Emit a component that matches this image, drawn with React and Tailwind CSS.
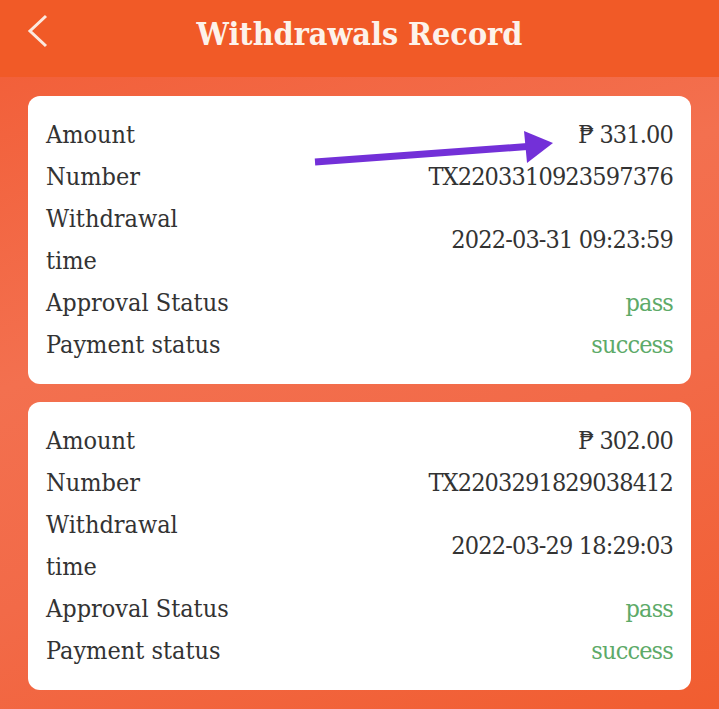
import React from 'react';

const records = [
  { amount: '₱ 331.00', number: 'TX2203310923597376', time: '2022-03-31 09:23:59' },
  { amount: '₱ 302.00', number: 'TX2203291829038412', time: '2022-03-29 18:29:03' },
];

const serif = { fontFamily: '"DejaVu Serif Condensed", "DejaVu Serif", serif' };

function Row({ label, children, valueClass = 'text-[#333]' }) {
  return (
    <div className="flex items-center justify-between leading-[42px]">
      <div className="text-[#333]">{label}</div>
      <div className={`tracking-[-0.85px] ${valueClass}`}>{children}</div>
    </div>
  );
}

function RecordCard({ r, arrow }) {
  return (
    <div className="relative bg-white rounded-[12px] px-[18px] py-[18px] text-[25px]">
      <Row label="Amount">{r.amount}</Row>
      <Row label="Number">{r.number}</Row>
      <Row label={<span className="block">Withdrawal<br />time</span>}>{r.time}</Row>
      <Row label="Approval Status" valueClass="text-[#5daa68]">pass</Row>
      <Row label="Payment status" valueClass="text-[#5daa68]">success</Row>
      {arrow && (
        <svg className="absolute left-[280px] top-[28px]" width="260" height="50" viewBox="0 0 260 50">
          <line x1="7" y1="38" x2="226" y2="22" stroke="#7330d8" strokeWidth="7" />
          <polygon points="245,19 216,7 219,39" fill="#7330d8" />
        </svg>
      )}
    </div>
  );
}

export default function App() {
  return (
    <div className="w-[719px] h-[709px] overflow-hidden flex flex-col" style={serif}>
      <div className="h-[77px] bg-[#f15a27] flex items-center relative shrink-0">
        <svg className="absolute left-[26px] top-[14px]" width="24" height="36" viewBox="0 0 24 36">
          <polyline points="20,2 4,17 20,32" fill="none" stroke="#fbe9df" strokeWidth="3" />
        </svg>
        <h1 className="w-full text-center text-[32px] font-bold text-[#fdf2ea] -mt-[10px]">Withdrawals Record</h1>
      </div>
      <div className="flex-1 bg-[linear-gradient(160deg,#f2603a_0%,#f3704f_35%,#f26a48_60%,#f15d30_100%)] px-[28px] pt-[19px] flex flex-col gap-[18px]">
        {records.map((r, i) => (
          <RecordCard key={r.number} r={r} arrow={i === 0} />
        ))}
      </div>
    </div>
  );
}
